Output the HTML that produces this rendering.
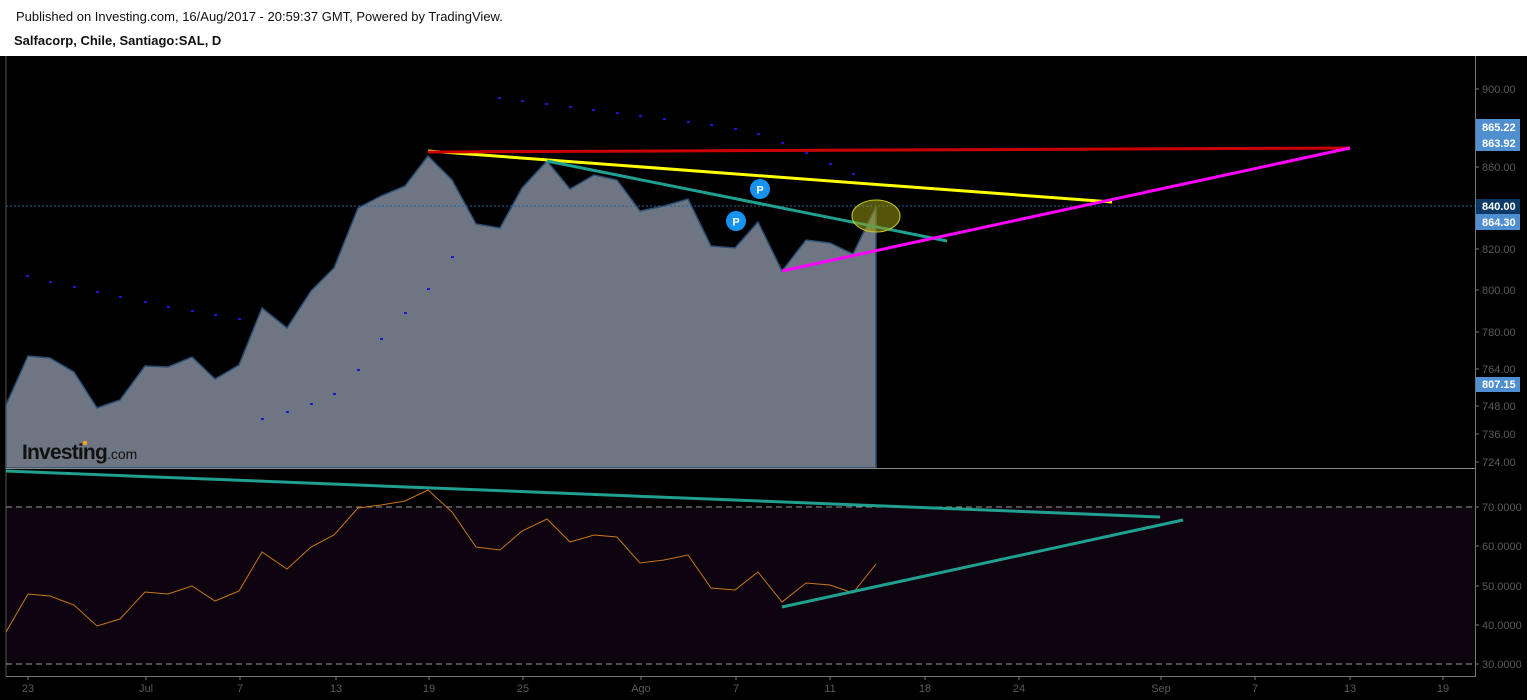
<!DOCTYPE html>
<html><head><meta charset="utf-8"><style>
html,body{margin:0;padding:0;background:#fff;width:1533px;height:700px;overflow:hidden}
svg{display:block}
</style></head><body>
<svg width="1533" height="700" xmlns="http://www.w3.org/2000/svg" font-family="Liberation Sans, Arial, sans-serif">
<rect x="0" y="0" width="1533" height="700" fill="#fff"/>
<text x="16" y="21" font-size="13" fill="#111">Published on Investing.com, 16/Aug/2017 - 20:59:37 GMT, Powered by TradingView.</text>
<text x="14" y="45" font-size="13" font-weight="bold" fill="#111">Salfacorp, Chile, Santiago:SAL, D</text>
<rect x="0" y="56" width="1527" height="644" fill="#000"/>
<rect x="6" y="507" width="1469" height="157" fill="#0d0410"/>
<polygon fill="#6d7682" stroke="#2a4f73" stroke-width="1.5" points="6,405 28,356 50,358 74,372 97,408 120,400 145,366 168,367 192,357 215,379 239,365 262,308 287,328 311,291 334,268 358,208 381,196 405,186 428,156 452,180 476,224 500,228 522,188 547,161 570,189 594,175 617,180 640,211 664,206 688,199 711,246 735,248 758,222 782,271 806,240 830,243 853,254 876,207 876,468 6,468"/>
<g fill="#1a1acc">
<rect x="26" y="275" width="3" height="2"/><rect x="49" y="281" width="3" height="2"/><rect x="73" y="286" width="3" height="2"/><rect x="96" y="291" width="3" height="2"/><rect x="119" y="296" width="3" height="2"/><rect x="144" y="301" width="3" height="2"/><rect x="167" y="306" width="3" height="2"/><rect x="191" y="310" width="3" height="2"/><rect x="214" y="314" width="3" height="2"/><rect x="238" y="318" width="3" height="2"/>
<rect x="261" y="418" width="3" height="2"/><rect x="286" y="411" width="3" height="2"/><rect x="310" y="403" width="3" height="2"/><rect x="333" y="393" width="3" height="2"/><rect x="357" y="369" width="3" height="2"/><rect x="380" y="338" width="3" height="2"/><rect x="404" y="312" width="3" height="2"/><rect x="427" y="288" width="3" height="2"/><rect x="451" y="256" width="3" height="2"/>
<rect x="498" y="97" width="3" height="2"/><rect x="521" y="100" width="3" height="2"/><rect x="545" y="103" width="3" height="2"/><rect x="569" y="106" width="3" height="2"/><rect x="592" y="109" width="3" height="2"/><rect x="616" y="112" width="3" height="2"/><rect x="639" y="115" width="3" height="2"/><rect x="663" y="118" width="3" height="2"/><rect x="687" y="121" width="3" height="2"/><rect x="710" y="124" width="3" height="2"/><rect x="734" y="128" width="3" height="2"/><rect x="757" y="133" width="3" height="2"/><rect x="781" y="142" width="3" height="2"/><rect x="805" y="152" width="3" height="2"/><rect x="829" y="163" width="3" height="2"/><rect x="852" y="173" width="3" height="2"/>
</g>
<line x1="6" y1="206" x2="1475" y2="206" stroke="#1f5f9f" stroke-width="1" stroke-dasharray="2,2"/>
<line x1="428" y1="151" x2="1112" y2="202" stroke="#ffff00" stroke-width="3"/>
<line x1="428" y1="152" x2="1350" y2="148" stroke="#cc0000" stroke-width="3"/>
<line x1="547" y1="161" x2="947" y2="241" stroke="#20a090" stroke-width="3"/>
<line x1="782" y1="271" x2="1350" y2="148" stroke="#ff00ff" stroke-width="3"/>
<ellipse cx="876" cy="216" rx="24" ry="16" fill="#9a9a10" fill-opacity="0.55" stroke="#c8c820" stroke-width="1"/>
<circle cx="760" cy="189" r="10" fill="#1493f0"/><text x="760" y="193.5" font-size="11" font-weight="bold" fill="#fff" text-anchor="middle">P</text>
<circle cx="736" cy="221" r="10" fill="#1493f0"/><text x="736" y="225.5" font-size="11" font-weight="bold" fill="#fff" text-anchor="middle">P</text>
<text x="22" y="459" font-size="21" font-weight="bold" fill="#111" letter-spacing="-0.8">Investing<tspan font-size="14" font-weight="normal" letter-spacing="0">.com</tspan></text>
<rect x="83" y="441" width="4" height="4" fill="#f0a020"/>
<line x1="6" y1="468.5" x2="1475" y2="468.5" stroke="#888" stroke-width="1"/>
<line x1="6" y1="56" x2="6" y2="676" stroke="#555" stroke-width="1"/>
<line x1="1475.5" y1="56" x2="1475.5" y2="676" stroke="#777" stroke-width="1"/>
<line x1="6" y1="676.5" x2="1476" y2="676.5" stroke="#777" stroke-width="1"/>
<line x1="6" y1="507" x2="1475" y2="507" stroke="#999" stroke-dasharray="6,4"/>
<line x1="6" y1="664" x2="1475" y2="664" stroke="#999" stroke-dasharray="6,4"/>
<polyline fill="none" stroke="#c8761a" stroke-width="1" points="6,632 28,594 50,596 74,605 97,626 120,619 145,592 168,594 192,586 215,601 239,591 262,552 287,569 311,547 334,535 358,508 381,505 405,501 428,490 452,512 476,547 500,550 522,531 547,519 570,542 594,535 617,537 640,563 664,560 688,555 711,588 735,590 758,572 782,602 806,583 830,585 853,593 876,564"/>
<line x1="6" y1="471" x2="1160" y2="517" stroke="#20a090" stroke-width="3"/>
<line x1="782" y1="607" x2="1183" y2="520" stroke="#20a090" stroke-width="3"/>
<g font-size="11" fill="#5a5a5a">
<g stroke="#777"><line x1="1475" y1="89" x2="1479" y2="89"/><line x1="1475" y1="167" x2="1479" y2="167"/><line x1="1475" y1="249" x2="1479" y2="249"/><line x1="1475" y1="290" x2="1479" y2="290"/><line x1="1475" y1="332" x2="1479" y2="332"/><line x1="1475" y1="369" x2="1479" y2="369"/><line x1="1475" y1="406" x2="1479" y2="406"/><line x1="1475" y1="434" x2="1479" y2="434"/><line x1="1475" y1="462" x2="1479" y2="462"/>
<line x1="1475" y1="507" x2="1479" y2="507"/><line x1="1475" y1="546" x2="1479" y2="546"/><line x1="1475" y1="586" x2="1479" y2="586"/><line x1="1475" y1="625" x2="1479" y2="625"/><line x1="1475" y1="664" x2="1479" y2="664"/></g>
<text x="1482" y="93">900.00</text><text x="1482" y="171">860.00</text><text x="1482" y="253">820.00</text><text x="1482" y="294">800.00</text><text x="1482" y="336">780.00</text><text x="1482" y="373">764.00</text><text x="1482" y="410">748.00</text><text x="1482" y="438">736.00</text><text x="1482" y="466">724.00</text>
<text x="1482" y="511">70.0000</text><text x="1482" y="550">60.0000</text><text x="1482" y="590">50.0000</text><text x="1482" y="629">40.0000</text><text x="1482" y="668">30.0000</text>
</g>
<g font-size="11" font-weight="bold" fill="#fff">
<rect x="1476" y="119" width="44" height="32" fill="#4f8fcf"/>
<text x="1482" y="131">865.22</text><text x="1482" y="147">863.92</text>
<rect x="1476" y="199" width="44" height="15" fill="#0c3a66"/><text x="1482" y="210">840.00</text>
<rect x="1476" y="214" width="44" height="16" fill="#4f8fcf"/><text x="1482" y="226">864.30</text>
<rect x="1476" y="377" width="44" height="15" fill="#4f8fcf"/><text x="1482" y="388">807.15</text>
</g>
<g font-size="11" fill="#5a5a5a" text-anchor="middle">
<g stroke="#777"><line x1="28" y1="676" x2="28" y2="680"/><line x1="146" y1="676" x2="146" y2="680"/><line x1="240" y1="676" x2="240" y2="680"/><line x1="336" y1="676" x2="336" y2="680"/><line x1="429" y1="676" x2="429" y2="680"/><line x1="523" y1="676" x2="523" y2="680"/><line x1="641" y1="676" x2="641" y2="680"/><line x1="736" y1="676" x2="736" y2="680"/><line x1="830" y1="676" x2="830" y2="680"/><line x1="925" y1="676" x2="925" y2="680"/><line x1="1019" y1="676" x2="1019" y2="680"/><line x1="1161" y1="676" x2="1161" y2="680"/><line x1="1255" y1="676" x2="1255" y2="680"/><line x1="1350" y1="676" x2="1350" y2="680"/><line x1="1443" y1="676" x2="1443" y2="680"/></g>
<text x="28" y="692">23</text><text x="146" y="692">Jul</text><text x="240" y="692">7</text><text x="336" y="692">13</text><text x="429" y="692">19</text><text x="523" y="692">25</text><text x="641" y="692">Ago</text><text x="736" y="692">7</text><text x="830" y="692">11</text><text x="925" y="692">18</text><text x="1019" y="692">24</text><text x="1161" y="692">Sep</text><text x="1255" y="692">7</text><text x="1350" y="692">13</text><text x="1443" y="692">19</text>
</g>
</svg>
</body></html>
